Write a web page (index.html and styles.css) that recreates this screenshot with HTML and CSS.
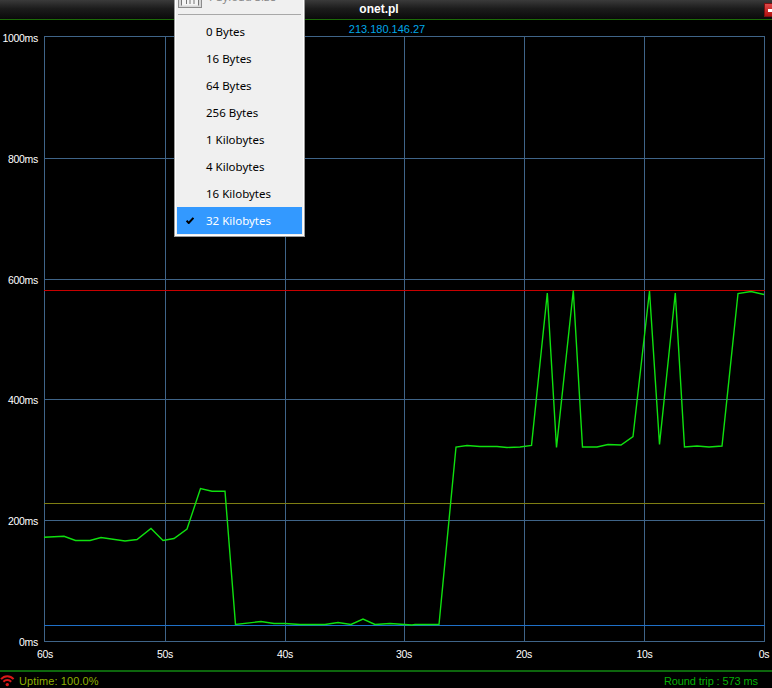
FILE: index.html
```html
<!DOCTYPE html>
<html lang="en">
<head>
<meta charset="utf-8">
<title>onet.pl</title>
<link rel="stylesheet" href="styles.css">
</head>
<body>
<div class="app">
  <header class="titlebar">
    <span class="title">onet.pl</span>
    <span class="close"><span class="close-dash"></span></span>
  </header>
  <div class="host">213.180.146.27</div>
  <svg class="chart" viewBox="0 36 772 634" width="772" height="634">
    <g class="grid">
      <path d="M44.5 36V641M165.5 36V641M285.5 36V641M404.5 36V641M524.5 36V641M644.5 36V641M764.5 36V641"/>
      <path d="M44 36.5H765M44 158.5H765M44 279.5H765M44 399.5H765M44 520.5H765M44 641.5H765"/>
    </g>
    <path class="line-olive" d="M44 503.5H765"/>
    <path class="line-blue" d="M44 625.5H765"/>
    <path class="line-red" d="M44 290.5H765"/>
    <polyline class="trace" points="44,537.3 64,536.3 75.5,540.5 90,540.5 101,537.5 125,541 137,539.5 151,528.5 163,540.5 174,538.5 187,529 200.5,488.5 212,491.3 225,491.3 235.5,624.5 261,621.5 274,623.5 285,623.5 300,624.5 325,624.5 338,622.5 351,624.5 363,619 375,624.5 390,623.5 412,625 415,624.5 439,624.5 456,447 467,445.5 480,446.5 497,446.5 507,447.5 520,447 531.5,445.5 547.3,293 556.5,447.5 573.3,290.5 582.5,447 597,447 608,444.5 621,445 633,436.5 649.5,291 659.5,444.5 675.3,293 684.5,447 697,446 709,447 722,446 738,293.5 751,291.5 764,294.5"/>
    <g class="ylabels">
      <text x="38" y="42">1000ms</text>
      <text x="38" y="163">800ms</text>
      <text x="38" y="284">600ms</text>
      <text x="38" y="404">400ms</text>
      <text x="38" y="525">200ms</text>
      <text x="38" y="646">0ms</text>
    </g>
    <g class="xlabels">
      <text x="45" y="658">60s</text>
      <text x="165" y="658">50s</text>
      <text x="285" y="658">40s</text>
      <text x="404" y="658">30s</text>
      <text x="524" y="658">20s</text>
      <text x="644.5" y="658">10s</text>
      <text x="764" y="658">0s</text>
    </g>
  </svg>
  <footer class="status">
    <div class="uptime">
      <svg class="wifi" viewBox="0 0 15 13" width="15" height="13">
        <path d="M1 5.2C4.5 1.2 10 1.2 13.6 5.2"/>
        <path d="M3.4 7.8C5.6 5.4 9 5.4 11.2 7.8"/>
        <circle cx="7.3" cy="10.6" r="1.7"/>
      </svg>
      <span>Uptime: 100.0%</span>
    </div>
    <div class="trip">Round trip : 573 ms</div>
  </footer>
  <nav class="menu">
    <div class="menu-head">
      <svg class="menu-icon" viewBox="0 0 24 24" width="24" height="24">
        <rect x="0.5" y="0.5" width="23" height="23"/>
        <path d="M3.5 21.5V14.5H20.5V21.5M8.5 14.5V20M12 14.5V20M16 14.5V20"/>
      </svg>
      <span>Payload Size</span>
    </div>
    <hr class="menu-sep">
    <div class="menu-item">0 Bytes</div>
    <div class="menu-item">16 Bytes</div>
    <div class="menu-item">64 Bytes</div>
    <div class="menu-item">256 Bytes</div>
    <div class="menu-item">1 Kilobytes</div>
    <div class="menu-item">4 Kilobytes</div>
    <div class="menu-item">16 Kilobytes</div>
    <div class="menu-item selected">
      <svg class="check" viewBox="0 0 8 7" width="8" height="7"><path d="M0.6 3.8L2.7 6L7.4 0.8"/></svg>
      32 Kilobytes
    </div>
  </nav>
</div>
</body>
</html>
```
FILE: styles.css
```css
* { box-sizing: border-box; }
html, body { margin: 0; padding: 0; background: #000; }
.app {
  position: relative;
  width: 772px;
  height: 688px;
  overflow: hidden;
  display: flex;
  flex-direction: column;
  background: #000;
  font-family: "Liberation Sans", Arial, sans-serif;
  font-size: 11px;
}
.titlebar {
  position: relative;
  height: 20px;
  flex: none;
  display: flex;
  align-items: center;
  justify-content: center;
  padding-right: 14px;
  padding-bottom: 1px;
  background: linear-gradient(#3a3a3a, #1c1c1c 45%, #0a0a0a);
  border-bottom: 1px solid #1c6a08;
}
.title { color: #fff; font-weight: bold; font-size: 12px; }
.close {
  position: absolute;
  left: 764px;
  top: 3px;
  width: 18px;
  height: 14px;
  background: linear-gradient(#e04848, #b01010);
  border: 1px solid #7a1010;
  display: flex;
  align-items: center;
}
.close-dash { width: 12px; height: 3px; margin-left: 3px; background: #fff; }
.host {
  height: 16px;
  flex: none;
  padding-top: 3px;
  padding-left: 2px;
  text-align: center;
  line-height: 13px;
  color: #00a8e8;
}
.chart { display: block; flex: none; overflow: visible; }
.grid path { fill: none; stroke: #3f6488; stroke-width: 1; }
.line-olive { stroke: #7e7e12; stroke-width: 1; fill: none; }
.line-blue { stroke: #1f70c8; stroke-width: 1; fill: none; }
.line-red { stroke: #c80000; stroke-width: 1; fill: none; }
.trace { fill: none; stroke: #0fe00f; stroke-width: 1.4; stroke-linejoin: miter; }
.ylabels text, .xlabels text {
  fill: #fff;
  font-family: "Liberation Sans", Arial, sans-serif;
  font-size: 10.5px;
  letter-spacing: -0.3px;
}
.ylabels text { text-anchor: end; }
.xlabels text { text-anchor: middle; }
.status {
  flex: 1;
  display: flex;
  justify-content: space-between;
  align-items: center;
  border-top: 2px solid #0d660d;
  padding: 1px 14px 0 0;
  line-height: 14px;
}
.uptime { display: flex; align-items: center; gap: 4px; color: #8fb000; letter-spacing: 0.1px; }
.wifi { display: block; }
.wifi path { fill: none; stroke: #d81818; stroke-width: 2; }
.wifi circle { fill: #d81818; }
.trip { color: #05b005; letter-spacing: -0.1px; }
.menu {
  position: absolute;
  left: 174px;
  top: -17px;
  width: 131px;
  height: 254px;
  padding: 0 2px;
  background: #f0f0f0;
  border: 1px solid #9a9a9a;
  box-shadow: inset 0 0 0 1px #fff;
  font-family: "Noto Sans", sans-serif;
  font-size: 11.5px;
  color: #000;
}
.menu-head {
  height: 30px;
  display: flex;
  align-items: flex-end;
  gap: 6px;
  padding: 0 0 6px 1px;
  color: #8a8a8a;
}
.menu-head span { align-self: flex-start; line-height: 16px; margin: 5px 0 0 1px; }
.menu-icon { display: block; flex: none; }
.menu-icon rect { fill: #d8d8d8; stroke: #8c8c8c; }
.menu-icon path { fill: #f4f4f4; stroke: #777; }
.menu-sep {
  height: 1px;
  margin: 0 1px 3px;
  border: 0;
  background: #a8a8a8;
}
.menu-item {
  position: relative;
  height: 27px;
  line-height: 27px;
  padding-left: 29px;
  white-space: nowrap;
}
.menu-item.selected { background: #3399ff; color: #fff; }
.check { position: absolute; left: 9px; top: 10px; }
.check path { fill: none; stroke: #000; stroke-width: 2; }
```
